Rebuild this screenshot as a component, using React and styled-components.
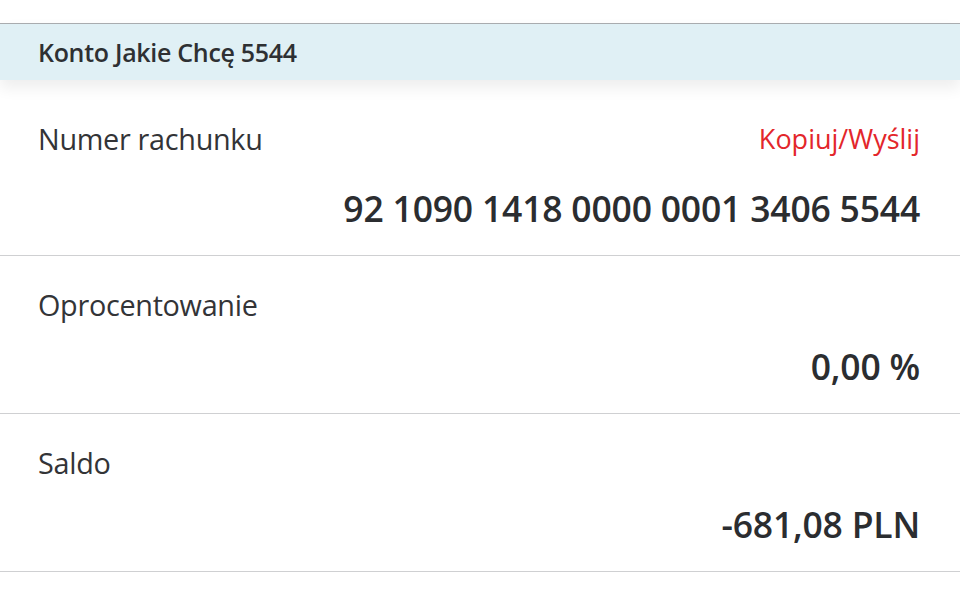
import React from "react";
import styled, { createGlobalStyle } from "styled-components";

const Global = createGlobalStyle`
  html, body { margin: 0; padding: 0; background: #fff; }
  body { font-family: "Open Sans", "Noto Sans", sans-serif; color: #2f3033; }
`;

const Page = styled.div`
  width: 960px;
  height: 600px;
  overflow: hidden;
  padding-top: 23px;
  box-sizing: border-box;
`;

const Header = styled.div`
  position: relative;
  z-index: 1;
  border-top: 1px solid #a9acaf;
  background: #e0f0f5;
  height: 56px;
  display: flex;
  align-items: center;
  padding: 0 38px;
  box-shadow: 0 8px 14px rgba(0, 0, 0, 0.07);
`;

const HeaderTitle = styled.span`
  font-size: 25px;
  font-weight: 600;
  letter-spacing: -0.3px;
  color: #2e3033;
`;

const Row = styled.div`
  display: flex;
  flex-direction: column;
  padding: ${(p) => (p.$first ? "38px" : "28px")} 40px 0 38px;
  height: ${(p) => (p.$first ? "176px" : "158px")};
  box-sizing: border-box;
  border-bottom: 1px solid #cfd0d2;
`;

const TopLine = styled.div`
  display: flex;
  justify-content: space-between;
  align-items: center;
  height: 40px;
`;

const Label = styled.span`
  font-size: 28.8px;
  font-weight: 400;
  letter-spacing: -0.3px;
  color: #333437;
`;

const Action = styled.span`
  font-size: 27px;
  color: #e3262b;
  letter-spacing: 0;
`;

const Value = styled.div`
  align-self: flex-end;
  margin-top: ${(p) => (p.$first ? "30px" : "22px")};
  font-size: 35.5px;
  font-weight: 600;
  letter-spacing: -0.2px;
  color: #2b2d30;
  line-height: 40px;
`;

const rows = [
  { label: "Numer rachunku", action: "Kopiuj/Wyślij", value: "92 1090 1418 0000 0001 3406 5544" },
  { label: "Oprocentowanie", value: "0,00 %" },
  { label: "Saldo", value: "-681,08 PLN" },
];

export default function App() {
  return (
    <Page>
      <Global />
      <Header>
        <HeaderTitle>Konto Jakie Chcę 5544</HeaderTitle>
      </Header>
      {rows.map((r, i) => (
        <Row key={r.label} $first={i === 0}>
          <TopLine>
            <Label>{r.label}</Label>
            {r.action && <Action>{r.action}</Action>}
          </TopLine>
          <Value $first={i === 0}>{r.value}</Value>
        </Row>
      ))}
    </Page>
  );
}
